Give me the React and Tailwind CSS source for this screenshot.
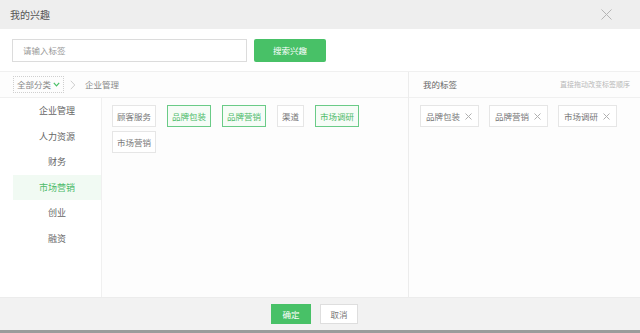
const font = { fontFamily: '"Noto Sans CJK SC", "Noto Sans", sans-serif' }

const categories = ["企业管理", "人力资源", "财务", "市场营销", "创业", "融资"]

const tags = [
  { name: "顾客服务", on: false },
  { name: "品牌包装", on: true },
  { name: "品牌营销", on: true },
  { name: "渠道", on: false },
  { name: "市场调研", on: true },
  { name: "市场营销", on: false },
]

const mine = ["品牌包装", "品牌营销", "市场调研"]

export default function App() {
  return (
    <div
      className="w-[640px] h-[333px] flex flex-col bg-white text-[#666] overflow-hidden"
      style={font}
    >
      {/* header */}
      <div className="h-[29px] shrink-0 bg-[#eeeeee] flex items-center justify-between pl-[10px] pr-[28px]">
        <span className="text-[10px] text-[#555]">我的兴趣</span>
        <svg width="11" height="11" viewBox="0 0 11 11" className="text-[#b5b5b5]">
          <path d="M0.5 0.5 L10.5 10.5 M10.5 0.5 L0.5 10.5" stroke="currentColor" strokeWidth="1" />
        </svg>
      </div>

      {/* search */}
      <div className="h-[43px] shrink-0 flex items-center px-[12px] border-b border-[#f0f0f0]">
        <div className="w-[235px] h-[23px] border border-[#dcdcdc] flex items-center pl-[10px] text-[8.5px] text-[#999]">
          请输入标签
        </div>
        <button className="ml-[7px] w-[72px] h-[23px] bg-[#48c167] text-white text-[8.5px] rounded-[2px]">
          搜索兴趣
        </button>
      </div>

      {/* main */}
      <div className="flex-1 flex min-h-0 bg-[#fdfdfd]">
        <div className="flex-1 flex flex-col border-r border-[#ececec]">
          <div className="h-[26px] shrink-0 flex items-center pl-[13px] border-b border-[#f0f0f0]">
            <div className="h-[17px] px-[3px] flex items-center gap-[2px] border border-dotted border-[#cfcfcf] text-[8.5px] text-[#888]">
              全部分类
              <svg width="7" height="5" viewBox="0 0 7 5">
                <path d="M0.8 0.8 L3.5 3.8 L6.2 0.8" fill="none" stroke="#48c167" strokeWidth="1.2" />
              </svg>
            </div>
            <svg width="6" height="10" viewBox="0 0 6 10" className="ml-[6px]">
              <path d="M0.8 0.8 L4.8 5 L0.8 9.2" fill="none" stroke="#c8c8c8" strokeWidth="0.9" />
            </svg>
            <span className="ml-[9px] text-[8.5px] text-[#888]">企业管理</span>
          </div>
          <div className="flex-1 flex min-h-0">
            <div className="w-[102px] shrink-0 border-r border-[#f0f0f0] bg-white">
              {categories.map((c) => (
                <div
                  key={c}
                  className={
                    "ml-[13px] h-[25.5px] flex items-center justify-center text-[9px] " +
                    (c === "市场营销" ? "bg-[#f1faf3] text-[#4dbb6a]" : "text-[#666]")
                  }
                >
                  {c}
                </div>
              ))}
            </div>
            <div className="flex-1 pl-[10px] pt-[7px] flex flex-wrap content-start gap-y-[4px] pr-[20px]">
              {tags.map((t) => (
                <span
                  key={t.name}
                  className={
                    "h-[22px] px-[4px] mr-[11px] flex items-center border text-[8.5px] " +
                    (t.on
                      ? "border-[#6acb87] text-[#4dbb6a] bg-[#f6fcf7]"
                      : "border-[#e6e6e6] text-[#777] bg-white")
                  }
                >
                  {t.name}
                </span>
              ))}
            </div>
          </div>
        </div>

        <div className="w-[231px] shrink-0 flex flex-col">
          <div className="h-[26px] shrink-0 flex items-center justify-between pl-[14px] pr-[10px] border-b border-[#f0f0f0]">
            <span className="text-[8.5px] text-[#666]">我的标签</span>
            <span className="text-[7px] text-[#b8b8b8]">直接拖动改变标签顺序</span>
          </div>
          <div className="pl-[11px] pt-[7px] flex gap-[10px]">
            {mine.map((m) => (
              <span
                key={m}
                className="h-[22px] pl-[5px] pr-[6px] flex items-center gap-[5px] border border-[#e6e6e6] bg-white text-[8.5px] text-[#777]"
              >
                {m}
                <svg width="7" height="7" viewBox="0 0 7 7">
                  <path d="M0.5 0.5 L6.5 6.5 M6.5 0.5 L0.5 6.5" stroke="#b0b0b0" strokeWidth="1" />
                </svg>
              </span>
            ))}
          </div>
        </div>
      </div>

      {/* footer */}
      <div className="h-[33px] shrink-0 bg-[#f2f2f2] flex items-center justify-center gap-[9px] pr-[11px] border-t border-[#ececec]">
        <button className="w-[40px] h-[20px] bg-[#48c167] text-white text-[8.5px]">确定</button>
        <button className="w-[38px] h-[20px] bg-white border border-[#dedede] text-[#777] text-[8.5px]">
          取消
        </button>
      </div>
      <div className="h-[3px] shrink-0 bg-[#9b9b9b]" />
    </div>
  )
}
